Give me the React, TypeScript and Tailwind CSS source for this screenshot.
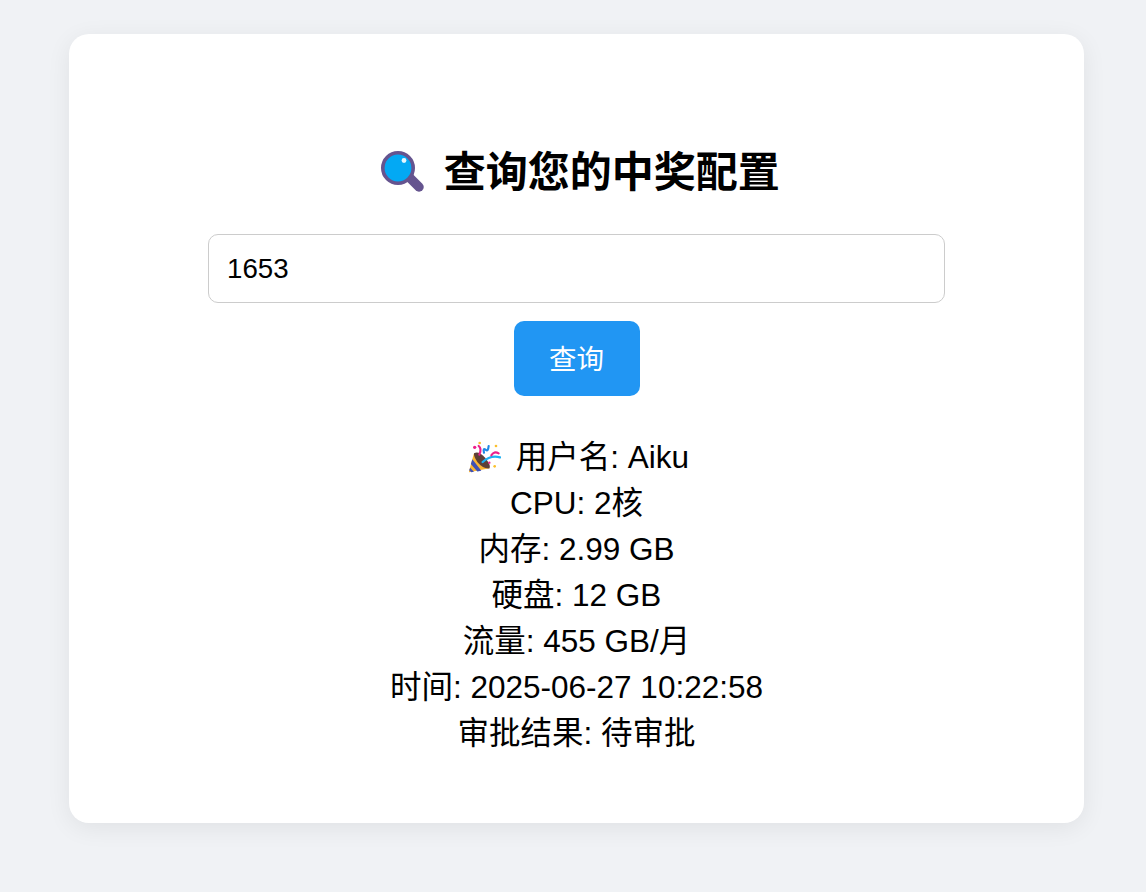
const font = { fontFamily: '"Liberation Sans", "Noto Sans CJK SC", sans-serif' };

function Magnifier() {
  return (
    <svg width="48" height="48" viewBox="376 149 48 48" className="shrink-0">
      <path d="M409 177 L419 187" stroke="#65548f" strokeWidth="9.5" strokeLinecap="round" />
      <circle cx="398" cy="168" r="15.2" fill="#03a9f4" stroke="#65548f" strokeWidth="3.6" />
      <circle cx="404" cy="160.5" r="2.4" fill="#e6f7fe" />
    </svg>
  );
}

function Party() {
  return (
    <svg width="32" height="32" viewBox="15 9 96 96" className="shrink-0">
      <path d="M14 103 L30 46 L77 91 Z" fill="#fbb534" />
      <path d="M18.5 89 L30 101 L22 103 L15.5 97 Z M25 64 L52 98 L40 100.5 L20.5 78 Z" fill="#3f51b5" />
      <path d="M30 46 Q44 38 62 58 Q82 82 77 91 Q58 94 40 72 Q28 54 30 46 Z" fill="#5d4037" />
      <path d="M56 72 Q80 50 108 58" fill="none" stroke="#1eb0f2" strokeWidth="7" strokeLinecap="round" />
      <path d="M60 44 Q56 28 66 36 Q72 42 74 24" fill="none" stroke="#1e88e5" strokeWidth="6.5" strokeLinecap="round" />
      <path d="M46 50 Q54 32 44 24" fill="none" stroke="#ec1e8c" strokeWidth="6.5" strokeLinecap="round" />
      <path d="M82 52 Q90 38 104 46" fill="none" stroke="#ec1e8c" strokeWidth="6.5" strokeLinecap="round" />
      <circle cx="32" cy="28" r="5" fill="#ec1e8c" />
      <circle cx="47" cy="15" r="4" fill="#fbc02d" />
      <circle cx="96" cy="24" r="4" fill="#fbc02d" />
      <circle cx="92" cy="85" r="4" fill="#fbc02d" />
      <circle cx="76" cy="74" r="3.5" fill="#ec1e8c" />
    </svg>
  );
}

const lines = ["CPU: 2核", "内存: 2.99 GB", "硬盘: 12 GB", "流量: 455 GB/月", "时间: 2025-06-27 10:22:58", "审批结果: 待审批"];

export default function App() {
  return (
    <div className="min-h-[892px] bg-[#f0f2f5] px-[69px] pt-[34px] pb-[69px] text-black" style={font}>
      <div className="w-[1015px] h-[789px] rounded-[20px] bg-white shadow-[0_5px_25px_rgba(0,0,0,0.07)] pt-[113px] flex flex-col items-center">
        <h1 className="flex items-center justify-center h-[52px] gap-[19.5px] pl-[3px] text-[42px] leading-[52px] font-bold">
          <Magnifier />
          <span>查询您的中奖配置</span>
        </h1>
        <input
          readOnly
          value="1653"
          className="mt-[35px] w-[737px] h-[69px] rounded-[10px] border border-[#ccc] pl-[18px] pr-[19px] text-[27.7px] text-black outline-none"
          style={font}
        />
        <button className="mt-[18px] w-[126px] h-[75px] rounded-[10px] bg-[#2196f3] text-white text-[27.5px] pt-[3px]" style={font}>
          查询
        </button>
        <div className="mt-[38px] flex flex-col items-center text-[31.5px] leading-[46px]">
          <div className="flex items-center gap-[15px]">
            <span className="ml-[5px]"><Party /></span>
            <span>用户名: Aiku</span>
          </div>
          {lines.map((l) => (
            <div key={l}>{l}</div>
          ))}
        </div>
      </div>
    </div>
  );
}
